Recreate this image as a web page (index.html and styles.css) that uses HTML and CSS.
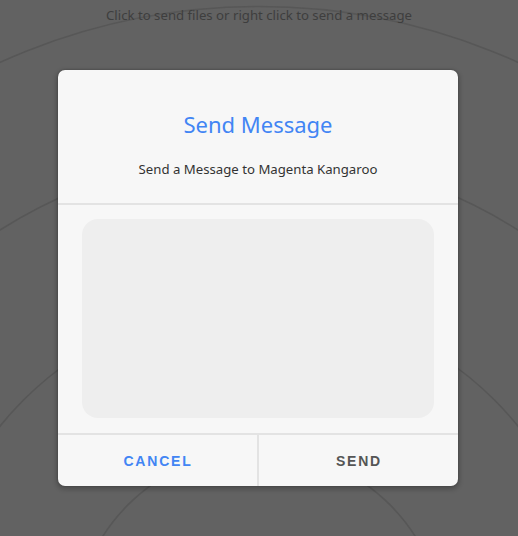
FILE: index.html
```
<!DOCTYPE html>
<html>
<head>
<meta charset="utf-8">
<link rel="stylesheet" href="styles.css">
</head>
<body>
<svg class="bg" width="518" height="536" viewBox="0 0 518 536">
  <g fill="none" stroke="#575757" stroke-width="1.6">
    <circle cx="259" cy="635.5" r="37"/>
    <circle cx="259" cy="635.5" r="185"/>
    <circle cx="259" cy="635.5" r="333"/>
    <circle cx="259" cy="635.5" r="481"/>
    <circle cx="259" cy="635.5" r="629"/>
  </g>
</svg>
<div class="hint">Click to send files or right click to send a message</div>
<div class="overlay">
  <div class="dialog">
    <div class="head">
      <h2 class="title">Send Message</h2>
      <div class="sub">Send a Message to Magenta Kangaroo</div>
    </div>
    <div class="body">
      <div class="textbox"></div>
    </div>
    <div class="actions">
      <div class="btn cancel">CANCEL</div>
      <div class="btn send">SEND</div>
    </div>
  </div>
</div>
</body>
</html>
```
FILE: styles.css
```
html, body {
  margin: 0;
  padding: 0;
  width: 518px;
  height: 536px;
  overflow: hidden;
  background: #626262;
  font-family: "Noto Sans", "Open Sans", sans-serif;
}
.bg {
  position: absolute;
  left: 0;
  top: 0;
}
.hint {
  position: relative;
  text-align: center;
  font-size: 13.2px;
  line-height: 20px;
  padding-top: 5px;
  color: #3e3e3e;
}
.overlay {
  position: absolute;
  left: 0;
  top: 0;
  width: 518px;
  height: 536px;
  display: flex;
  justify-content: center;
  align-items: flex-start;
  padding: 70px 2px 0 0;
  box-sizing: border-box;
}
.dialog {
  width: 400px;
  background: #f7f7f7;
  border-radius: 7px;
  box-shadow: 0 2px 4px 2px rgba(0,0,0,0.18), 0 0 2px rgba(0,0,0,0.3);
  overflow: hidden;
}
.head {
  padding: 38px 24px 24px;
  text-align: center;
  border-bottom: 2px solid #e3e3e3;
}
.title {
  margin: 0;
  font-weight: 400;
  font-size: 22px;
  line-height: 32px;
  color: #4285f4;
}
.sub {
  margin-top: 19px;
  font-size: 13.2px;
  line-height: 20px;
  color: #333;
}
.body {
  padding: 14px 24px 15px;
}
.textbox {
  height: 199px;
  background: #eeeeee;
  border-radius: 16px;
}
.actions {
  display: flex;
  border-top: 2px solid #e3e3e3;
  height: 51px;
}
.btn {
  flex: 1;
  display: flex;
  align-items: center;
  justify-content: center;
  font-family: "Liberation Sans", Arial, sans-serif;
  font-weight: 700;
  font-size: 14px;
  letter-spacing: 1.8px;
  padding-left: 1px;
}
.cancel {
  color: #4285f4;
  border-right: 2px solid #e3e3e3;
}
.send {
  color: #555;
}
```
